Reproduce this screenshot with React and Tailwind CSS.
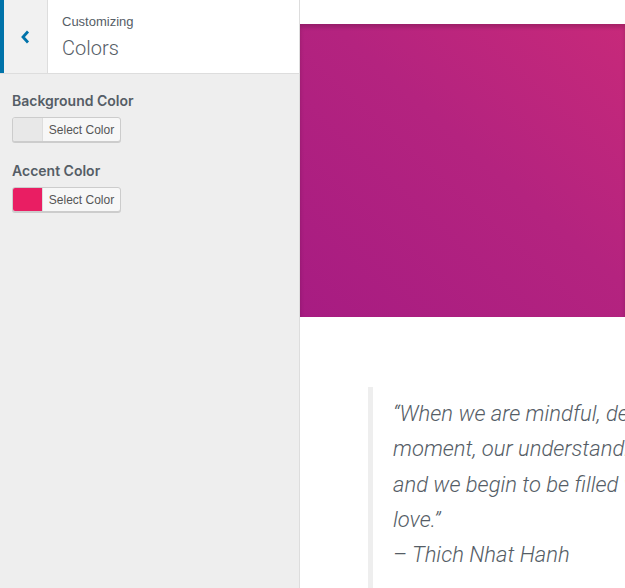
// Customizer "Colors" panel next to the live preview
function ColorControl({ label, swatch }) {
  return (
    <div className="mb-[20px]">
      <div className="text-[14px] font-semibold leading-[18px] text-[#555d66] mb-[7px]" style={{ fontFamily: 'Inter, "Liberation Sans", sans-serif', fontWeight: 600 }}>{label}</div>
      <button className="flex h-[25px] w-[109px] items-stretch overflow-hidden rounded-[3px] border border-[#cccccc] bg-[#f7f7f7] shadow-[0_1px_0_#cccccc] p-0">
        <span className={`w-[30px] shrink-0 border-r border-[#dddddd] ${swatch}`} />
        <span className="flex flex-1 items-center justify-center text-[12px] text-[#555555] leading-none">Select Color</span>
      </button>
    </div>
  )
}

export default function App() {
  return (
    <div className="flex h-[588px] w-[625px] overflow-hidden bg-white" style={{ fontFamily: '"Liberation Sans", Arial, sans-serif' }}>
      {/* sidebar */}
      <div className="flex w-[300px] shrink-0 flex-col border-r border-[#dddddd] bg-[#eeeeee]">
        <div className="flex h-[74px] border-b border-[#dddddd] bg-white">
          <div className="flex w-[48px] items-center justify-center border-l-4 border-[#0073aa] border-r border-r-[#dddddd] bg-[#f1f1f1] pr-[2px]">
            <svg width="10" height="16" viewBox="0 0 10 16" fill="none">
              <path d="M8 2.5 L3 8 L8 13.5" stroke="#0073aa" strokeWidth="2.8" strokeLinecap="butt" strokeLinejoin="miter" />
            </svg>
          </div>
          <div className="flex flex-col pl-[14px] pt-[14px]">
            <span className="text-[13px] leading-[16px] text-[#555d66]">Customizing</span>
            <span className="mt-[6px] text-[20px] leading-[24px] font-light text-[#555d66]" style={{ fontFamily: 'Roboto, "Liberation Sans", sans-serif', fontWeight: 300 }}>Colors</span>
          </div>
        </div>
        <div className="px-[12px] pt-[18px]">
          <ColorControl label="Background Color" swatch="bg-[#e8e8e8]" />
          <ColorControl label="Accent Color" swatch="bg-[#e91e63]" />
        </div>
      </div>

      {/* preview */}
      <div className="flex min-w-0 flex-1 flex-col overflow-hidden bg-white">
        <div className="h-[24px] shrink-0" />
        <div className="h-[293px] shrink-0 bg-[linear-gradient(to_top_right,#a71c82,#b4237f_55%,#c7297a)] shadow-[inset_0_3px_4px_rgba(0,0,0,0.18)]" />
        <div className="mt-[70px] ml-[68px] flex flex-1 border-l-[5px] border-[#eeeeee] pl-[20px] pt-[9px]">
          <div className="whitespace-nowrap text-[22px] italic leading-[35.3px] text-[#555d66]" style={{ fontFamily: 'Roboto, "Liberation Sans", sans-serif', fontWeight: 300 }}>
            <div>“When we are mindful, deeply in touch with the present</div>
            <div>moment, our understanding of what is going on deepens,</div>
            <div>and we begin to be filled with acceptance, joy, peace and</div>
            <div>love.”</div>
            <div>– Thich Nhat Hanh</div>
          </div>
        </div>
      </div>
    </div>
  )
}
